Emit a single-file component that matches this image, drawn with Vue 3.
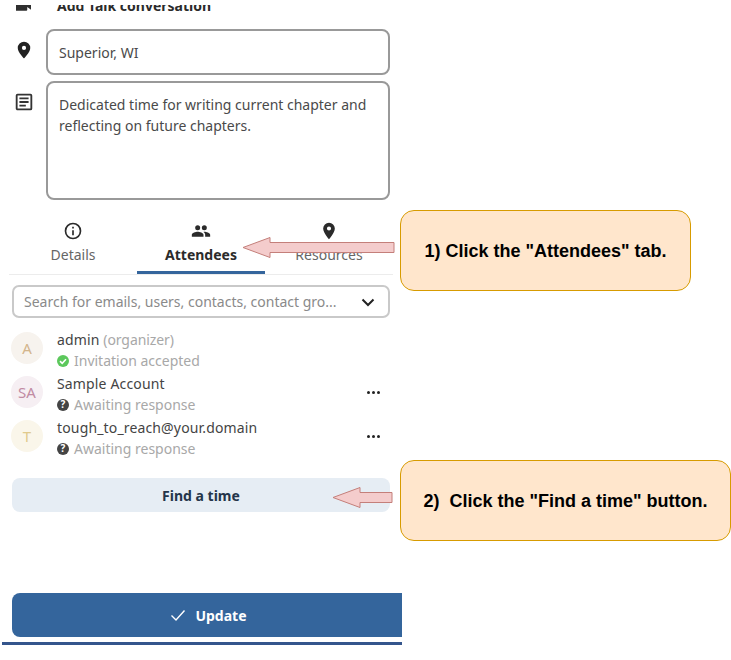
<template>
  <div class="page">
    <div class="sidebar">
      <div class="talk-row">
        <svg class="talk-icon" width="15" height="12" viewBox="0 0 16 12"><path d="M0 0h11a1 1 0 0 1 1 1v3l4-3v10l-4-3v3a1 1 0 0 1-1 1H0z" fill="#2f2f2f"/></svg>
        <span>Add Talk conversation</span>
      </div>

      <div class="field-row location">
        <svg class="field-icon" width="24" height="20" viewBox="0 0 24 24"><path d="M12 2a7.500 7.500 0 0 0-7.500 7.500c0 5.200 7.500 12.500 7.500 12.500s7.500-7.300 7.500-12.500A7.500 7.500 0 0 0 12 2zm0 10a2.500 2.500 0 1 1 0-5 2.500 2.500 0 0 1 0 5z" fill="#222"/></svg>
        <div class="field">Superior, WI</div>
      </div>
      <div class="field-row notes">
        <svg class="field-icon" width="24" height="22" viewBox="0 0 24 24"><path d="M19 3H5a2 2 0 0 0-2 2v14c0 1.100.9 2 2 2h14a2 2 0 0 0 2-2V5a2 2 0 0 0-2-2zm0 16H5V5h14zM7 7h10v2H7zm0 4h10v2H7zm0 4h7v2H7z" fill="#333"/></svg>
        <div class="field tall">Dedicated time for writing current chapter and reflecting on future chapters.</div>
      </div>

      <div class="tabs">
        <div v-for="tab in tabs" :key="tab.name" class="tab" :class="{ active: tab.active }">
          <svg width="20" height="20" viewBox="0 0 24 24"><path :d="tab.icon" fill="#2b2b2b"/></svg>
          <span>{{ tab.name }}</span>
        </div>
      </div>

      <div class="search">
        <span>Search for emails, users, contacts, contact gro...</span>
        <svg width="16" height="16" viewBox="0 0 16 16"><path d="M2.500 5.500 8 11l5.500-5.500" fill="none" stroke="#222" stroke-width="2"/></svg>
      </div>

      <div class="people">
        <div v-for="p in people" :key="p.name" class="person">
          <div class="avatar" :style="{ background: p.bg, color: p.fg }">{{ p.initials }}</div>
          <div class="person-info">
            <div class="person-name">{{ p.name }} <em v-if="p.role">{{ p.role }}</em></div>
            <div class="person-status">
              <svg width="14" height="14" viewBox="0 0 14 14">
                <circle cx="7" cy="7" r="6" :fill="p.accepted ? '#5cc85c' : '#444'"/>
                <path v-if="p.accepted" d="M4 7.200 6.200 9.300 10 5.200" fill="none" stroke="#fff" stroke-width="1.600"/>
                <text v-else x="7" y="10.200" text-anchor="middle" class="q">?</text>
              </svg>
              <span>{{ p.status }}</span>
            </div>
          </div>
          <div v-if="!p.accepted" class="dots"><i></i><i></i><i></i></div>
        </div>
      </div>

      <div class="find">Find a time</div>

      <div class="update">
        <svg width="18" height="18" viewBox="0 0 18 18"><path d="M2.500 9.500 7 14l8.500-9.500" fill="none" stroke="#fff" stroke-width="1.400"/></svg>
        <span>Update</span>
      </div>
      <div class="bottom-line"></div>
    </div>

    <div class="top-mask"></div>

    <!-- annotation layer -->
    <svg class="arrow arrow-one" width="153" height="23" viewBox="0 0 153 23"><path d="M1 11.500 28 1.500v5h124v10H28v5z" fill="#f4cccc" stroke="#c47f7a"/></svg>
    <svg class="arrow arrow-two" width="62" height="23" viewBox="0 0 62 23"><path d="M1 11.500 28 1.500v5h32v10H28v5z" fill="#f4cccc" stroke="#c47f7a"/></svg>
    <div class="callout callout-one">1) Click the "Attendees" tab.</div>
    <div class="callout callout-two">2)&nbsp; Click the "Find a time" button.</div>
  </div>
</template>

<script setup>
const tabs = [
  { name: 'Details', icon: 'M11 7h2v2h-2zm0 4h2v6h-2zm1-9a10 10 0 1 0 0 20 10 10 0 0 0 0-20zm0 18a8 8 0 1 1 0-16 8 8 0 0 1 0 16z' },
  { name: 'Attendees', active: true, icon: 'M16 11a3 3 0 1 0 0-6 3 3 0 0 0 0 6zm-8 0a3 3 0 1 0 0-6 3 3 0 0 0 0 6zm0 2c-2.300 0-7 1.200-7 3.500V19h14v-2.500C15 14.200 10.300 13 8 13zm8 0c-.3 0-.6 0-1 .1 1.200.8 2 2 2 3.400V19h6v-2.500c0-2.300-4.700-3.500-7-3.500z' },
  { name: 'Resources', icon: 'M12 2a7 7 0 0 0-7 7c0 5.200 7 13 7 13s7-7.800 7-13a7 7 0 0 0-7-7zm0 9.500a2.500 2.500 0 1 1 0-5 2.500 2.500 0 0 1 0 5z' },
]

const people = [
  { name: 'admin', role: '(organizer)', initials: 'A', bg: '#f7f3ee', fg: '#d3b58c', status: 'Invitation accepted', accepted: true },
  { name: 'Sample Account', initials: 'SA', bg: '#f6eff3', fg: '#c18ba3', status: 'Awaiting response' },
  { name: 'tough_to_reach@your.domain', initials: 'T', bg: '#faf6ea', fg: '#e0ca8d', status: 'Awaiting response' },
]
</script>

<style scoped>
.page {
  position: relative;
  width: 731px;
  height: 660px;
  overflow: hidden;
  background: #fff;
  font-family: "Noto Sans", sans-serif;
  color: #444;
}
.sidebar {
  width: 402px;
  display: flex;
  flex-direction: column;
}
.top-mask {
  position: absolute;
  left: 0;
  top: 0;
  width: 402px;
  height: 5px;
  background: #fff;
}
.talk-row {
  height: 24px;
  margin-top: -7px;
  display: flex;
  align-items: center;
  gap: 26px;
  padding-left: 16px;
  font-size: 14px;
  font-weight: 700;
  color: #2b2b2b;
}
.talk-icon {
  flex: none;
}
.field-row {
  display: flex;
  align-items: flex-start;
  gap: 10px;
  padding: 0 12px 0 12px;
}
.location {
  margin-top: 12px;
}
.notes {
  margin-top: 6px;
}
.field-icon {
  flex: none;
}
.location .field-icon {
  margin-top: 11px;
}
.notes .field-icon {
  margin-top: 10px;
}
.field {
  flex: 1;
  height: 46px;
  box-sizing: border-box;
  border: 2px solid #999;
  border-radius: 8px;
  padding: 0 11px;
  font-size: 14px;
  line-height: 44px;
  color: #4a4a4a;
}
.tall {
  height: 119px;
  padding: 11px 11px;
  line-height: 21px;
}
.tabs {
  display: flex;
  margin: 21px 9px 0 9px;
  height: 53px;
  border-bottom: 1px solid #ececec;
}
.tab {
  flex: 1;
  display: flex;
  flex-direction: column;
  align-items: center;
  gap: 4px;
  font-size: 14px;
  line-height: 20px;
  color: #666;
  box-sizing: border-box;
}
.tab.active {
  font-weight: 700;
  color: #2b2b2b;
  border-bottom: 3px solid #34659c;
  height: 53px;
}
.search {
  margin: 10px 12px 0 12px;
  height: 33px;
  box-sizing: border-box;
  border: 2px solid #c9c9c9;
  border-radius: 7px;
  padding: 0 12px 0 10px;
  display: flex;
  align-items: center;
  justify-content: space-between;
  font-size: 14px;
  color: #8a8a8a;
}
.people {
  margin-top: 8px;
  padding: 0 22px 0 11px;
  display: flex;
  flex-direction: column;
}
.person {
  height: 44px;
  display: flex;
  align-items: center;
  gap: 14px;
}
.avatar {
  flex: none;
  width: 32px;
  height: 32px;
  border-radius: 50%;
  display: flex;
  align-items: center;
  justify-content: center;
  font-size: 15px;
}
.person-info {
  flex: 1;
  line-height: 21px;
  padding-top: 4px;
}
.person-name {
  font-size: 14px;
  letter-spacing: 0.15px;
  color: #444;
}
.person-name em {
  font-style: normal;
  letter-spacing: -0.1px;
  color: #a8a8a8;
}
.person-status {
  display: flex;
  align-items: center;
  gap: 4px;
  font-size: 14px;
  color: #a8a8a8;
}
.person-status svg {
  margin-left: -1px;
}
.q {
  font-size: 10px;
  font-weight: 700;
  fill: #fff;
}
.dots {
  display: flex;
  gap: 2px;
}
.dots i {
  width: 3px;
  height: 3px;
  border-radius: 50%;
  background: #222;
}
.find {
  margin: 20px 12px 0 12px;
  height: 34px;
  border-radius: 8px;
  background: #e6edf4;
  display: flex;
  align-items: center;
  justify-content: center;
  font-size: 14px;
  font-weight: 700;
  color: #24354a;
}
.update {
  margin: 81px 0 0 12px;
  padding-left: 2px;
  height: 44px;
  border-radius: 8px 0 0 8px;
  background: #34659c;
  color: #fff;
  display: flex;
  align-items: center;
  justify-content: center;
  gap: 8px;
  font-size: 14px;
  font-weight: 700;
}
.bottom-line {
  margin: 5px 0 0 2px;
  height: 3px;
  background: #34558c;
}
.callout {
  position: absolute;
  left: 400px;
  height: 81px;
  box-sizing: border-box;
  padding-top: 2px;
  background: #ffe6cc;
  border: 1px solid #d79b00;
  border-radius: 14px;
  display: flex;
  align-items: center;
  justify-content: center;
  font-family: "Liberation Sans", sans-serif;
  font-size: 18px;
  font-weight: 700;
  color: #000;
}
.callout-one {
  top: 210px;
  width: 291px;
}
.callout-two {
  top: 460px;
  width: 331px;
}
.arrow {
  position: absolute;
}
.arrow-one {
  left: 242px;
  top: 236px;
}
.arrow-two {
  left: 332px;
  top: 486px;
}
</style>
